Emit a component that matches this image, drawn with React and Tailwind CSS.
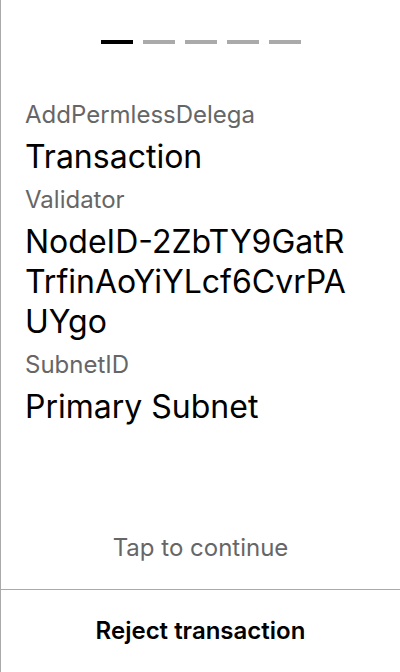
import React from "react";

const steps = [true, false, false, false, false];

const Field = ({ label, value, className = "" }) => (
  <div className={className}>
    <div className="text-[24px] leading-[28px] text-[#666]">{label}</div>
    <div className="mt-[8px] text-[32px] leading-[40px] text-black break-all">{value}</div>
  </div>
);

const App = () => {
  return (
    <div
      className="flex h-[672px] w-[400px] flex-col border-l border-[#aaa] bg-white"
      style={{ fontFamily: "Inter, 'Noto Sans', sans-serif" }}
    >
      <div className="flex flex-1 flex-col">
        <div className="flex justify-center gap-[10px] pt-[40px]">
          {steps.map((on, i) => (
            <div key={i} className={`h-[4px] w-[32px] ${on ? "bg-black" : "bg-[#aaa]"}`}></div>
          ))}
        </div>

        <div className="mt-[57px] pl-[24px] pr-[36px]">
          <Field label="AddPermlessDelega" value="Transaction" />
          <Field label="Validator" value="NodeID-2ZbTY9GatRTrfinAoYiYLcf6CvrPAUYgo" className="mt-[9px]" />
          <Field label="SubnetID" value="Primary Subnet" className="mt-[9px]" />
        </div>

        <div className="mt-auto pb-[27px] text-center text-[24px] leading-[28px] text-[#666]">
          Tap to continue
        </div>
      </div>

      <button className="h-[83px] w-full border-t border-[#aaa] text-[24px] font-semibold text-black">
        Reject transaction
      </button>
    </div>
  );
};

export default App;
